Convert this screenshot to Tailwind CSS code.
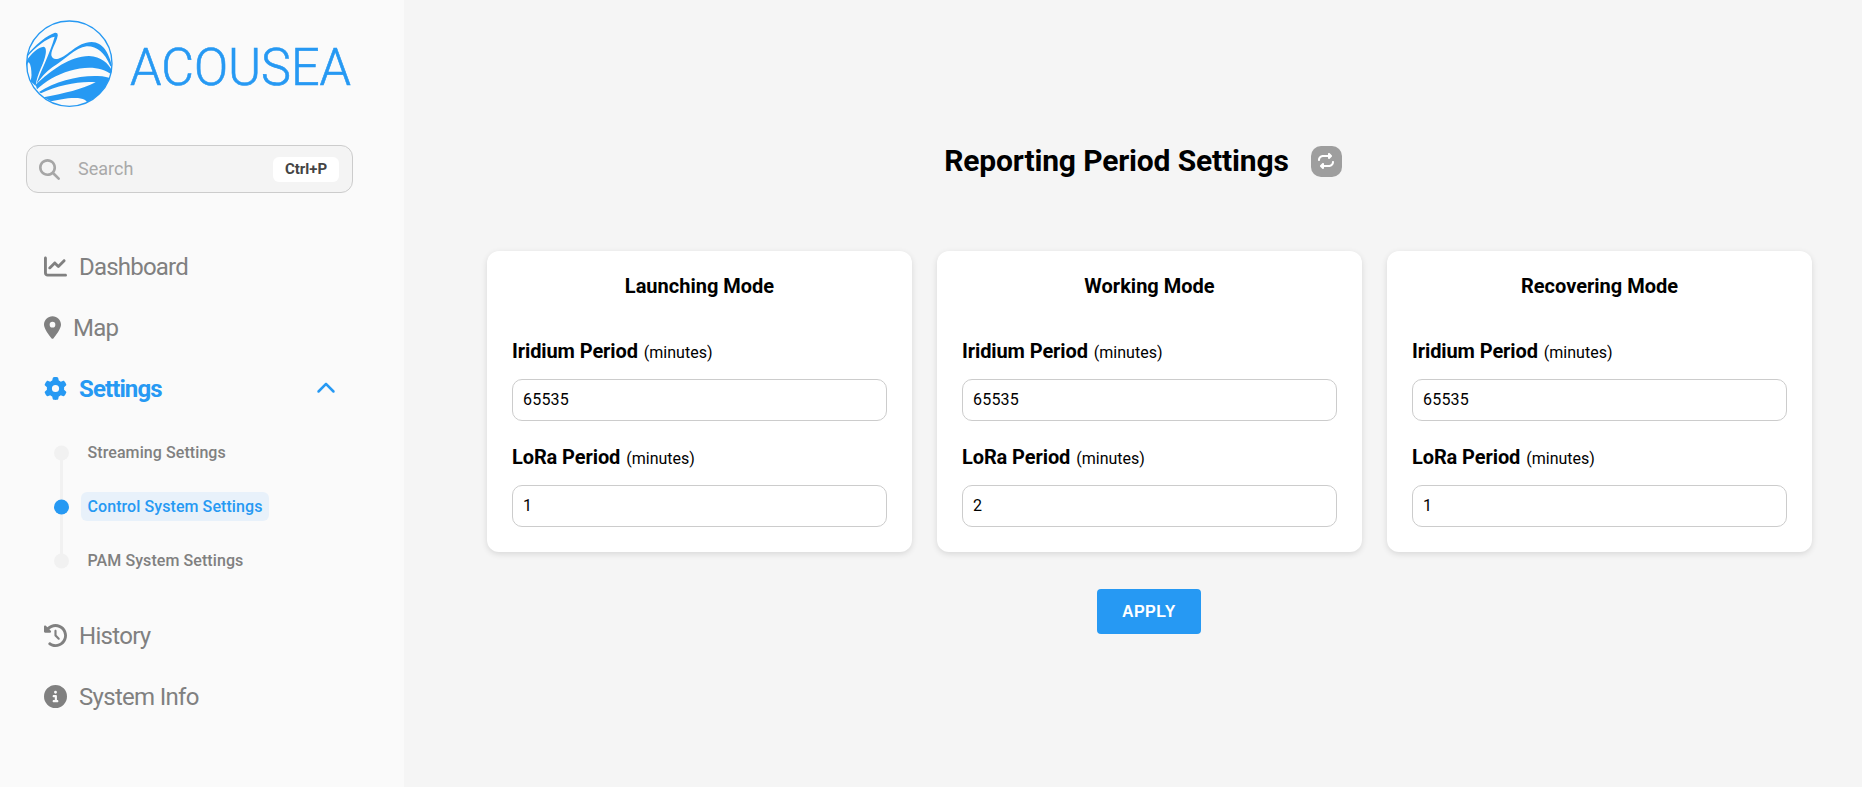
<!DOCTYPE html>
<html lang="en">
<head>
<meta charset="utf-8">
<title>Acousea</title>
<script src="https://cdn.jsdelivr.net/npm/@tailwindcss/browser@4"></script>
</head>
<body class="flex h-[787px] w-full overflow-hidden bg-[#f5f5f5] font-['Roboto',sans-serif] text-black">
<aside class="flex h-full w-[404px] shrink-0 flex-col bg-[#fafafa] pl-[26px]">
  <div class="mt-5 flex h-[88px] items-center">
    <svg class="size-[88px] shrink-0" viewBox="33 30 264 264" fill="#2699f3">
      <clipPath id="disc"><circle cx="163" cy="161" r="128"/></clipPath>
      <g clip-path="url(#disc)">
        <path d="M34 137C60 105 98 74 120 68Q130 67 128 78C124 98 108 120 109 136Q112 150 130 146C160 138 185 97 230 96C265 97 282 130 292 172L286 168C268 126 245 108 215 109C180 112 150 150 112 172C92 186 78 204 64 222C74 190 105 130 119 80C95 84 60 112 34 143Z"/>
        <path d="M32 156C50 128 70 112 86 110Q95 112 92 132C88 160 66 190 62 228L32 200Z"/>
        <ellipse cx="43" cy="184" rx="6" ry="27" fill="#fafafa" transform="rotate(-5 43 184)"/>
        <path d="M62 224C110 180 165 138 222 138C260 140 280 160 292 184L292 196C262 170 215 168 165 182C125 194 90 214 66 238Z"/>
        <path d="M72 246C120 214 190 196 248 198C268 199 280 202 290 206L262 246L215 282C220 272 205 264 180 264C150 264 130 270 108 274L86 262C150 250 200 238 242 217C200 212 130 224 78 250Z"/>
      </g>
      <circle cx="163" cy="161" r="128" fill="none" stroke="#2699f3" stroke-width="4"/>
    </svg>
    <svg class="ml-3 h-[70px] w-[236px] overflow-visible" viewBox="0 0 236 70" fill="#2699f3" stroke="#2699f3" stroke-width="0.6"><text x="4" y="56" font-family="Roboto" font-weight="300" font-size="51" textLength="221" lengthAdjust="spacingAndGlyphs">ACOUSEA</text></svg>
  </div>
  <div class="mt-[37px] flex h-12 w-[327px] items-center rounded-xl border border-[#ccc] bg-[#f4f4f4] pl-3 pr-[13px]">
    <svg class="size-[21px]" viewBox="0 0 512 512" fill="#a6a6a6"><path d="M416 208c0 45.900-14.900 88.300-40 122.700L502.600 457.400c12.500 12.500 12.500 32.800 0 45.300s-32.800 12.500-45.300 0L330.700 376c-34.400 25.200-76.800 40-122.700 40C93.100 416 0 322.900 0 208S93.100 0 208 0S416 93.100 416 208zM208 352a144 144 0 1 0 0-288 144 144 0 1 0 0 288z"/></svg>
    <span class="ml-[18px] text-lg text-[#a9a9a9]">Search</span>
    <span class="ml-auto flex h-[25px] w-[66px] items-center justify-center rounded-md bg-white text-[15px] font-bold text-[#444]">Ctrl+P</span>
  </div>
  <nav class="mt-[43px] flex flex-col pl-[18px] text-2xl text-[#808080]">
    <div class="flex h-[61px] items-center gap-3">
      <svg class="size-[23px]" viewBox="0 0 512 512" fill="currentColor"><path d="M64 64c0-17.700-14.300-32-32-32S0 46.300 0 64V400c0 44.200 35.800 80 80 80H480c17.700 0 32-14.300 32-32s-14.300-32-32-32H80c-8.800 0-16-7.200-16-16V64zm406.600 86.600c12.500-12.500 12.500-32.800 0-45.300s-32.800-12.500-45.300 0L320 210.700l-57.400-57.400c-12.500-12.500-32.800-12.500-45.300 0l-112 112c-12.500 12.500-12.500 32.800 0 45.300s32.800 12.500 45.300 0L240 221.300l57.400 57.400c12.500 12.500 32.800 12.500 45.300 0l128-128z"/></svg>
      <span class="tracking-[-0.8px]">Dashboard</span>
    </div>
    <div class="flex h-[61px] items-center gap-3">
      <svg class="h-[23px] w-[17px]" viewBox="0 0 384 512" fill="currentColor"><path fill-rule="evenodd" d="M215.700 499.200C267 435 384 279.400 384 192C384 86 298 0 192 0S0 86 0 192c0 87.400 117 243 168.300 307.200c12.300 15.300 35.100 15.300 47.400 0zM192 128a64 64 0 1 1 0 128 64 64 0 1 1 0-128z"/></svg>
      <span class="tracking-[-0.8px]">Map</span>
    </div>
    <div class="flex h-[61px] items-center gap-3 font-bold text-[#2699f3]">
      <svg class="size-[23px]" viewBox="0 0 512 512" fill="currentColor"><path d="M495.900 166.600c3.200 8.700 .5 18.400-6.400 24.600l-43.300 39.400c1.100 8.300 1.700 16.800 1.700 25.400s-.6 17.100-1.700 25.400l43.300 39.400c6.900 6.200 9.600 15.900 6.400 24.600c-4.400 11.900-9.700 23.300-15.800 34.300l-4.700 8.100c-6.600 11-14 21.400-22.100 31.200c-5.900 7.200-15.700 9.600-24.500 6.800l-55.700-17.700c-13.400 10.300-28.200 18.900-44 25.400l-12.500 57.100c-2 9.100-9 16.300-18.200 17.800c-13.800 2.300-28 3.500-42.500 3.500s-28.700-1.200-42.500-3.500c-9.200-1.500-16.200-8.700-18.200-17.800l-12.500-57.100c-15.800-6.500-30.600-15.100-44-25.400L83.100 425.900c-8.800 2.800-18.600 .3-24.500-6.800c-8.100-9.800-15.500-20.200-22.100-31.200l-4.700-8.100c-6.100-11-11.400-22.400-15.800-34.300c-3.200-8.700-.5-18.400 6.400-24.600l43.300-39.400C64.600 273.100 64 264.600 64 256s.6-17.100 1.700-25.400L22.400 191.200c-6.900-6.200-9.600-15.900-6.400-24.600c4.400-11.900 9.700-23.300 15.800-34.300l4.700-8.100c6.600-11 14-21.400 22.100-31.200c5.900-7.200 15.700-9.600 24.500-6.800l55.700 17.700c13.400-10.300 28.200-18.900 44-25.400l12.500-57.100c2-9.100 9-16.300 18.200-17.800C227.300 1.200 241.500 0 256 0s28.700 1.200 42.500 3.500c9.200 1.500 16.200 8.700 18.200 17.800l12.500 57.100c15.800 6.500 30.600 15.100 44 25.400l55.700-17.700c8.800-2.800 18.600-.3 24.500 6.800c8.100 9.800 15.500 20.200 22.100 31.200l4.700 8.100c6.100 11 11.400 22.400 15.800 34.300zM256 336a80 80 0 1 0 0-160 80 80 0 1 0 0 160z"/></svg>
      <span class="tracking-[-0.9px]">Settings</span>
      <svg class="ml-auto mr-[68px] size-5" viewBox="0 0 512 512" fill="currentColor"><path d="M233.400 105.400c12.500-12.500 32.800-12.500 45.300 0l192 192c12.500 12.500 12.500 32.800 0 45.300s-32.800 12.500-45.300 0L256 173.300 86.600 342.600c-12.500 12.500-32.800 12.500-45.300 0s-12.500-32.800 0-45.300l192-192z"/></svg>
    </div>
    <div class="mb-[17.5px] mt-[6.5px] flex h-[162px] pl-[10px] text-base font-medium tracking-[0.08px]">
      <svg class="h-[162px] w-[15px]" viewBox="0 0 15 162"><path d="M7.500 27V135" stroke="#f1f1f1" stroke-width="3"/><circle cx="7.500" cy="27" r="7.500" fill="#f1f1f1"/><circle cx="7.500" cy="81" r="7.500" fill="#2699f3"/><circle cx="7.500" cy="135" r="7.500" fill="#f1f1f1"/></svg>
      <div class="ml-3 flex flex-col">
        <div class="flex h-[54px] items-center px-[6.500px]">Streaming Settings</div>
        <div class="flex h-[54px] items-center"><span class="flex h-[29px] w-[188px] items-center rounded-md bg-[#e8f1fa] pl-[6.500px] text-[#2699f3]">Control System Settings</span></div>
        <div class="flex h-[54px] items-center px-[6.500px]">PAM System Settings</div>
      </div>
    </div>
    <div class="flex h-[61px] items-center gap-3">
      <svg class="size-[23px]" viewBox="0 0 512 512" fill="currentColor"><path d="M75 75L41 41C25.900 25.900 0 36.600 0 57.900V168c0 13.300 10.700 24 24 24H134.100c21.400 0 32.100-25.900 17-41l-30.800-30.800C155 85.500 203 64 256 64c106 0 192 86 192 192s-86 192-192 192c-40.800 0-78.600-12.700-109.700-34.400c-14.500-10.100-34.400-6.600-44.600 7.900s-6.600 34.400 7.900 44.600C151.200 495 201.700 512 256 512c141.400 0 256-114.600 256-256S397.400 0 256 0C185.300 0 121.300 28.700 75 75zm181 53c-13.300 0-24 10.700-24 24V256c0 6.400 2.500 12.500 7 17l72 72c9.400 9.400 24.600 9.400 33.900 0s9.400-24.600 0-33.900l-65-65V152c0-13.300-10.700-24-24-24z"/></svg>
      <span class="tracking-[-0.7px]">History</span>
    </div>
    <div class="flex h-[61px] items-center gap-3">
      <svg class="size-[23px]" viewBox="0 0 512 512" fill="currentColor"><path fill-rule="evenodd" d="M256 512A256 256 0 1 0 256 0a256 256 0 1 0 0 512zM216 336h24V272H216c-13.300 0-24-10.700-24-24s10.700-24 24-24h48c13.300 0 24 10.700 24 24v88h8c13.300 0 24 10.700 24 24s-10.700 24-24 24H216c-13.300 0-24-10.700-24-24s10.700-24 24-24zm40-208a32 32 0 1 1 0 64 32 32 0 1 1 0-64z"/></svg>
      <span class="tracking-[-0.7px]">System Info</span>
    </div>
  </nav>
</aside>
<main class="flex flex-1 flex-col items-center pl-[83px] pr-[50px]">
  <header class="mt-[141px] flex h-10 items-center pr-[13px]">
    <h1 class="text-3xl font-bold tracking-[-0.15px]">Reporting Period Settings</h1>
    <button class="ml-[22px] flex size-[31px] items-center justify-center rounded-[10px] bg-[#9e9e9e]"><svg class="size-4" viewBox="0 0 512 512" fill="#fff"><path d="M0 224c0 17.700 14.300 32 32 32s32-14.300 32-32c0-53 43-96 96-96H320v32c0 12.900 7.800 24.600 19.800 29.600s25.700 2.200 34.900-6.900l64-64c12.500-12.500 12.500-32.800 0-45.300l-64-64c-9.200-9.200-22.900-11.900-34.900-6.900S320 19.100 320 32V64H160C71.600 64 0 135.600 0 224zm512 64c0-17.700-14.300-32-32-32s-32 14.300-32 32c0 53-43 96-96 96H192V352c0-12.900-7.800-24.600-19.800-29.600s-25.700-2.200-34.900 6.900l-64 64c-12.500 12.500-12.500 32.800 0 45.300l64 64c9.200 9.200 22.900 11.900 34.900 6.900s19.800-16.600 19.800-29.600V448H352c88.400 0 160-71.600 160-160z"/></svg></button>
  </header>
  <div class="mt-[70px] grid w-full grid-cols-3 gap-[25px]">
    <section class="flex h-[301px] flex-col rounded-xl bg-white px-[25px] pt-[25px] shadow-[0_2px_6px_rgba(0,0,0,0.12)]">
      <h2 class="text-center text-xl/5 font-bold">Launching Mode</h2>
      <label class="mt-[43px] flex h-6 items-baseline gap-[6px] text-xl/6 font-bold"><span class="-tracking-[0.1px]">Iridium Period</span><span class="text-base/6 font-normal">(minutes)</span></label>
      <input class="mt-4 h-[42px] w-full rounded-[10px] border border-[#ccc] bg-white px-[10px] pb-[2px] text-base tracking-[0.2px]" value="65535">
      <label class="mt-6 flex h-6 items-baseline gap-[6px] text-xl/6 font-bold"><span class="-tracking-[0.1px]">LoRa Period</span><span class="text-base/6 font-normal">(minutes)</span></label>
      <input class="mt-4 h-[42px] w-full rounded-[10px] border border-[#ccc] bg-white px-[10px] pb-[2px] text-base tracking-[0.2px]" value="1">
    </section>
    <section class="flex h-[301px] flex-col rounded-xl bg-white px-[25px] pt-[25px] shadow-[0_2px_6px_rgba(0,0,0,0.12)]">
      <h2 class="text-center text-xl/5 font-bold">Working Mode</h2>
      <label class="mt-[43px] flex h-6 items-baseline gap-[6px] text-xl/6 font-bold"><span class="-tracking-[0.1px]">Iridium Period</span><span class="text-base/6 font-normal">(minutes)</span></label>
      <input class="mt-4 h-[42px] w-full rounded-[10px] border border-[#ccc] bg-white px-[10px] pb-[2px] text-base tracking-[0.2px]" value="65535">
      <label class="mt-6 flex h-6 items-baseline gap-[6px] text-xl/6 font-bold"><span class="-tracking-[0.1px]">LoRa Period</span><span class="text-base/6 font-normal">(minutes)</span></label>
      <input class="mt-4 h-[42px] w-full rounded-[10px] border border-[#ccc] bg-white px-[10px] pb-[2px] text-base tracking-[0.2px]" value="2">
    </section>
    <section class="flex h-[301px] flex-col rounded-xl bg-white px-[25px] pt-[25px] shadow-[0_2px_6px_rgba(0,0,0,0.12)]">
      <h2 class="text-center text-xl/5 font-bold">Recovering Mode</h2>
      <label class="mt-[43px] flex h-6 items-baseline gap-[6px] text-xl/6 font-bold"><span class="-tracking-[0.1px]">Iridium Period</span><span class="text-base/6 font-normal">(minutes)</span></label>
      <input class="mt-4 h-[42px] w-full rounded-[10px] border border-[#ccc] bg-white px-[10px] pb-[2px] text-base tracking-[0.2px]" value="65535">
      <label class="mt-6 flex h-6 items-baseline gap-[6px] text-xl/6 font-bold"><span class="-tracking-[0.1px]">LoRa Period</span><span class="text-base/6 font-normal">(minutes)</span></label>
      <input class="mt-4 h-[42px] w-full rounded-[10px] border border-[#ccc] bg-white px-[10px] pb-[2px] text-base tracking-[0.2px]" value="1">
    </section>
  </div>
  <button class="mr-px mt-[37px] h-[45px] w-[104px] rounded bg-[#2699f3] text-base font-bold tracking-[0.4px] text-white" style="font-family:'Liberation Sans',sans-serif">APPLY</button>
</main>
</body>
</html>
